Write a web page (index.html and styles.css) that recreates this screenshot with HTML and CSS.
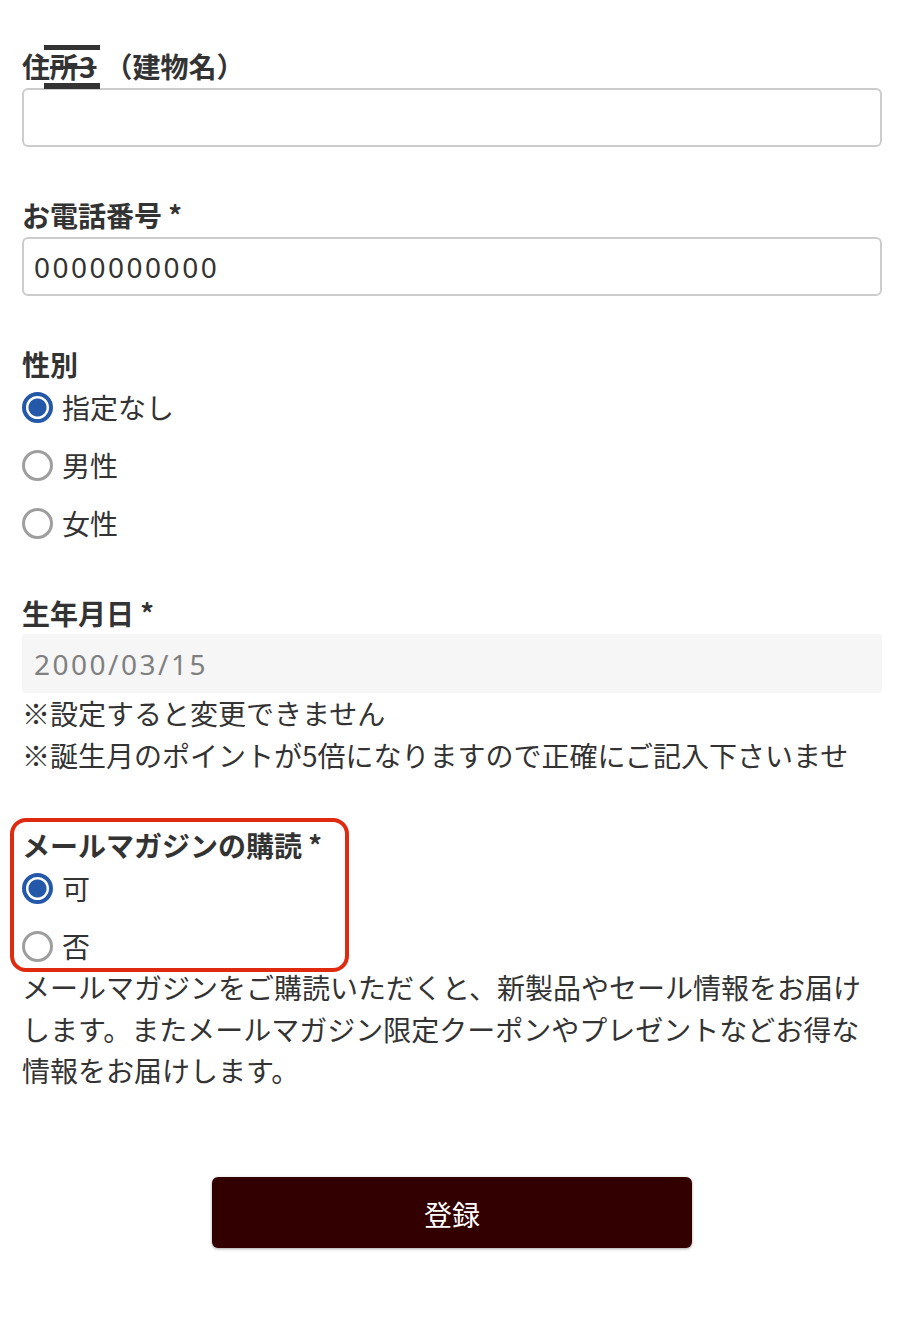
FILE: index.html
```html
<!DOCTYPE html>
<html lang="ja">
<head>
<meta charset="utf-8">
<title>会員登録</title>
<link rel="stylesheet" href="styles.css">
</head>
<body>
<form class="form">
  <div class="field field-first">
    <div class="label">住<span class="mark">所3</span>（建物名）</div>
    <input class="text-input" type="text" value="">
  </div>

  <div class="field">
    <div class="label">お電話番号 <span class="req">*</span></div>
    <input class="text-input num" type="text" value="0000000000">
  </div>

  <div class="field">
    <div class="label">性別</div>
    <div class="radios">
      <label class="radio-row"><input class="radio" type="radio" name="sex" checked><span>指定なし</span></label>
      <label class="radio-row"><input class="radio" type="radio" name="sex"><span>男性</span></label>
      <label class="radio-row"><input class="radio" type="radio" name="sex"><span>女性</span></label>
    </div>
  </div>

  <div class="field field-birth">
    <div class="label">生年月日 <span class="req">*</span></div>
    <input class="text-input num readonly" type="text" value="2000/03/15" readonly>
    <p class="note">※設定すると変更できません</p>
    <p class="note">※誕生月のポイントが5倍になりますので正確にご記入下さいませ</p>
  </div>

  <div class="field field-mail">
    <div class="highlight">
      <div class="label">メールマガジンの購読 <span class="req">*</span></div>
      <div class="radios">
        <label class="radio-row"><input class="radio" type="radio" name="mail" checked><span>可</span></label>
        <label class="radio-row"><input class="radio" type="radio" name="mail"><span>否</span></label>
      </div>
    </div>
    <p class="desc">メールマガジンをご購読いただくと、新製品やセール情報をお届けします。またメールマガジン限定クーポンやプレゼントなどお得な情報をお届けします。</p>
  </div>

  <div class="actions">
    <button class="submit" type="button">登録</button>
  </div>
</form>
</body>
</html>
```

FILE: styles.css
```css
* { box-sizing: border-box; }

html, body {
  margin: 0;
  padding: 0;
  background: #ffffff;
}

body {
  font-family: "Noto Sans CJK JP", "Noto Sans", sans-serif;
  color: #333333;
  font-size: 28px;
}

.form {
  padding: 48px 18px 60px 22px;
  display: flex;
  flex-direction: column;
}

.field {
  display: flex;
  flex-direction: column;
  margin-top: 50px;
}

.field-first { margin-top: 0; }
.field-birth { margin-top: 47px; }
.field-mail { margin-top: 51px; }

.label {
  font-weight: 700;
  font-size: 28px;
  line-height: 36px;
  height: 36px;
  color: #333333;
  white-space: nowrap;
}

.req {
  font-size: 27px;
  vertical-align: 1px;
}

.mark {
  position: relative;
  margin-right: 8px;
  letter-spacing: 1px;
  text-decoration: line-through;
  text-decoration-thickness: 3px;
  text-decoration-color: #333333;
}

.mark::before,
.mark::after {
  content: "";
  position: absolute;
  left: -6px;
  right: -3px;
  background: #333333;
}

.mark::before { top: -1px; height: 5px; }
.mark::after { top: 37px; height: 6px; }

.text-input {
  margin-top: 4px;
  width: 860px;
  height: 59px;
  border: 2px solid #cccccc;
  border-radius: 6px;
  background: #ffffff;
  padding: 0 10px;
  font-family: "Noto Sans CJK JP", "Noto Sans", sans-serif;
  font-size: 28px;
  color: #333333;
  outline: none;
}

.num {
  font-family: "Noto Sans", "Noto Sans CJK JP", sans-serif;
  letter-spacing: 2.5px;
}

.readonly {
  margin-top: 3px;
  border-color: #f6f6f6;
  background: #f6f6f6;
  color: #808080;
  border-radius: 4px;
}

.radios {
  display: flex;
  flex-direction: column;
  gap: 8px;
}

.radio-row {
  display: flex;
  align-items: center;
  gap: 9px;
  height: 50px;
  font-size: 28px;
}

.radio {
  appearance: none;
  -webkit-appearance: none;
  margin: 0;
  width: 31px;
  height: 31px;
  border-radius: 50%;
  border: 3px solid #9e9e9e;
  background: #ffffff;
  flex: none;
}

.radio:checked {
  border: 4px solid #2458a8;
  background: radial-gradient(circle, #2458a8 0 8.5px, #ffffff 9.5px);
}

.note {
  margin: 0;
  line-height: 42px;
  font-size: 28px;
  white-space: nowrap;
}

.field-birth .note:first-of-type { margin-top: -1px; }

.highlight {
  position: relative;
}

.highlight::before {
  content: "";
  position: absolute;
  top: -9px;
  left: -12px;
  width: 331px;
  bottom: -1px;
  border: 4px solid #e02a10;
  border-radius: 16px;
  pointer-events: none;
}

.desc {
  margin: -4px 0 0 0;
  width: 860px;
  font-size: 28px;
  line-height: 41.5px;
}

.actions {
  display: flex;
  justify-content: center;
  margin-top: 85px;
}

.submit {
  width: 480px;
  height: 71px;
  background: #330000;
  color: #ffffff;
  border: none;
  border-radius: 6px;
  box-shadow: 0 1px 3px rgba(0, 0, 0, 0.35);
  font-family: "Noto Sans CJK JP", sans-serif;
  font-size: 28px;
  line-height: 67px;
  padding: 4px 0 0 0;
  cursor: pointer;
}
```
